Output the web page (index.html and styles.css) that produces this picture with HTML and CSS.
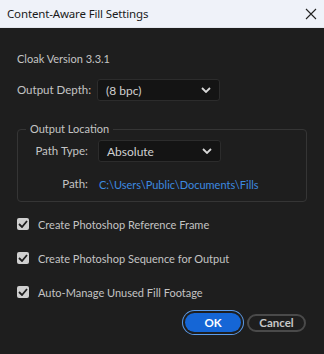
FILE: index.html
```html
<!DOCTYPE html>
<html lang="en">

<head>
  <meta charset="UTF-8">
  <title>Content-Aware Fill Settings</title>
  <link rel="stylesheet" href="styles.css">
</head>

<body>
  <div class="dialog">
    <div class="titlebar">
      <span class="title">Content-Aware Fill Settings</span>
      <svg class="close" width="12" height="12" viewBox="0 0 12 12">
        <path d="M1 1 L11 11 M11 1 L1 11" stroke="#222" stroke-width="1.1" fill="none" />
      </svg>
    </div>

    <div class="content">
      <div class="version">Cloak Version 3.3.1</div>

      <div class="row depth-row">
        <span class="label">Output Depth:</span>
        <div class="select">
          <span>(8 bpc)</span>
          <svg class="chevron" width="10" height="6" viewBox="0 0 10 6">
            <path d="M1 1 L5 5 L9 1" stroke="#d8d8d8" stroke-width="1.8" fill="none" />
          </svg>
        </div>
      </div>

      <fieldset class="group">
        <legend>Output Location</legend>
        <div class="row">
          <span class="label right">Path Type:</span>
          <div class="select">
            <span>Absolute</span>
            <svg class="chevron" width="10" height="6" viewBox="0 0 10 6">
              <path d="M1 1 L5 5 L9 1" stroke="#d8d8d8" stroke-width="1.8" fill="none" />
            </svg>
          </div>
        </div>
        <div class="row path-row">
          <span class="label right">Path:</span>
          <a class="path">C:\Users\Public\Documents\Fills</a>
        </div>
      </fieldset>

      <div class="checks">
        <label class="check"><span class="box"><svg width="10" height="8" viewBox="0 0 10 8"><path d="M1 4 L4 7 L9 1" stroke="#1e1e1e" stroke-width="1.8" fill="none" /></svg></span>Create Photoshop Reference Frame</label>
        <label class="check"><span class="box"><svg width="10" height="8" viewBox="0 0 10 8"><path d="M1 4 L4 7 L9 1" stroke="#1e1e1e" stroke-width="1.8" fill="none" /></svg></span>Create Photoshop Sequence for Output</label>
        <label class="check"><span class="box"><svg width="10" height="8" viewBox="0 0 10 8"><path d="M1 4 L4 7 L9 1" stroke="#1e1e1e" stroke-width="1.8" fill="none" /></svg></span>Auto-Manage Unused Fill Footage</label>
      </div>

      <div class="buttons">
        <button class="btn ok">OK</button>
        <button class="btn cancel">Cancel</button>
      </div>
    </div>
  </div>
</body>

</html>
```

FILE: styles.css
```css
* {
  margin: 0;
  padding: 0;
  box-sizing: border-box;
}

body {
  background: #1e1e1e;
  font-family: Lato, "Open Sans", sans-serif;
  width: 324px;
  height: 354px;
  overflow: hidden;
}

.titlebar {
  height: 28px;
  background: #eff2f9;
  border-bottom: 1px solid #e4e7ee;
  display: flex;
  align-items: center;
  justify-content: space-between;
  padding: 0 7px;
}

.title {
  font-family: "Noto Sans", "Open Sans", sans-serif;
  font-size: 11.5px;
  color: #1a1a1a;
  letter-spacing: -0.15px;
}

.content {
  padding: 23px 17px 0 17px;
  color: #c4c4c4;
  font-size: 11px;
}

.version {
  line-height: 16px;
}

.row {
  display: flex;
  align-items: center;
}

.depth-row {
  margin-top: 12px;
}

.label {
  width: 80px;
  flex-shrink: 0;
  line-height: 16px;
  font-size: 11.5px;
}

.label.right {
  width: 70px;
  text-align: right;
}

.select {
  width: 123px;
  height: 22px;
  flex-shrink: 0;
  background: #141414;
  border: 1px solid #2c2c2c;
  border-radius: 3px;
  display: flex;
  align-items: center;
  justify-content: space-between;
  padding: 0 8px;
  color: #d0d0d0;
  font-size: 12px;
}

.group {
  margin-top: 21px;
  border: 1px solid #353535;
  border-radius: 4px;
  padding: 4px 0 0 0;
  height: 80px;
}

.group legend {
  margin-left: 8px;
  padding: 0 4px;
  font-size: 11px;
  color: #c4c4c4;
  line-height: 14px;
}

.group .row .select {
  margin-left: 10px;
}

.path-row {
  margin-top: 14px;
}

.path {
  margin-left: 11px;
  color: #3d8ae0;
  font-size: 11px;
}

.checks {
  margin-top: 14px;
  display: flex;
  flex-direction: column;
  gap: 18px;
}

.check {
  display: flex;
  align-items: center;
  height: 16px;
  gap: 9px;
}

.box {
  width: 12px;
  height: 12px;
  background: #cfcfcf;
  border-radius: 2px;
  display: flex;
  align-items: center;
  justify-content: center;
}

.buttons {
  margin-top: 13px;
  display: flex;
  justify-content: flex-end;
  align-items: center;
  gap: 4px;
  padding-right: 1px;
}

.btn {
  font-family: Lato, "Open Sans", sans-serif;
  font-weight: bold;
  font-size: 11.5px;
  border-radius: 11px;
  height: 18px;
}

.ok {
  width: 56px;
  height: 19px;
  background: #1566d6;
  color: #fff;
  border: none;
  box-shadow: 0 0 0 2px #1e1e1e, 0 0 0 3px #5b9bea;
  margin-right: 2px;
}

.cancel {
  width: 59px;
  background: transparent;
  color: #c8c8c8;
  border: 2px solid #4a4a4a;
}
```
